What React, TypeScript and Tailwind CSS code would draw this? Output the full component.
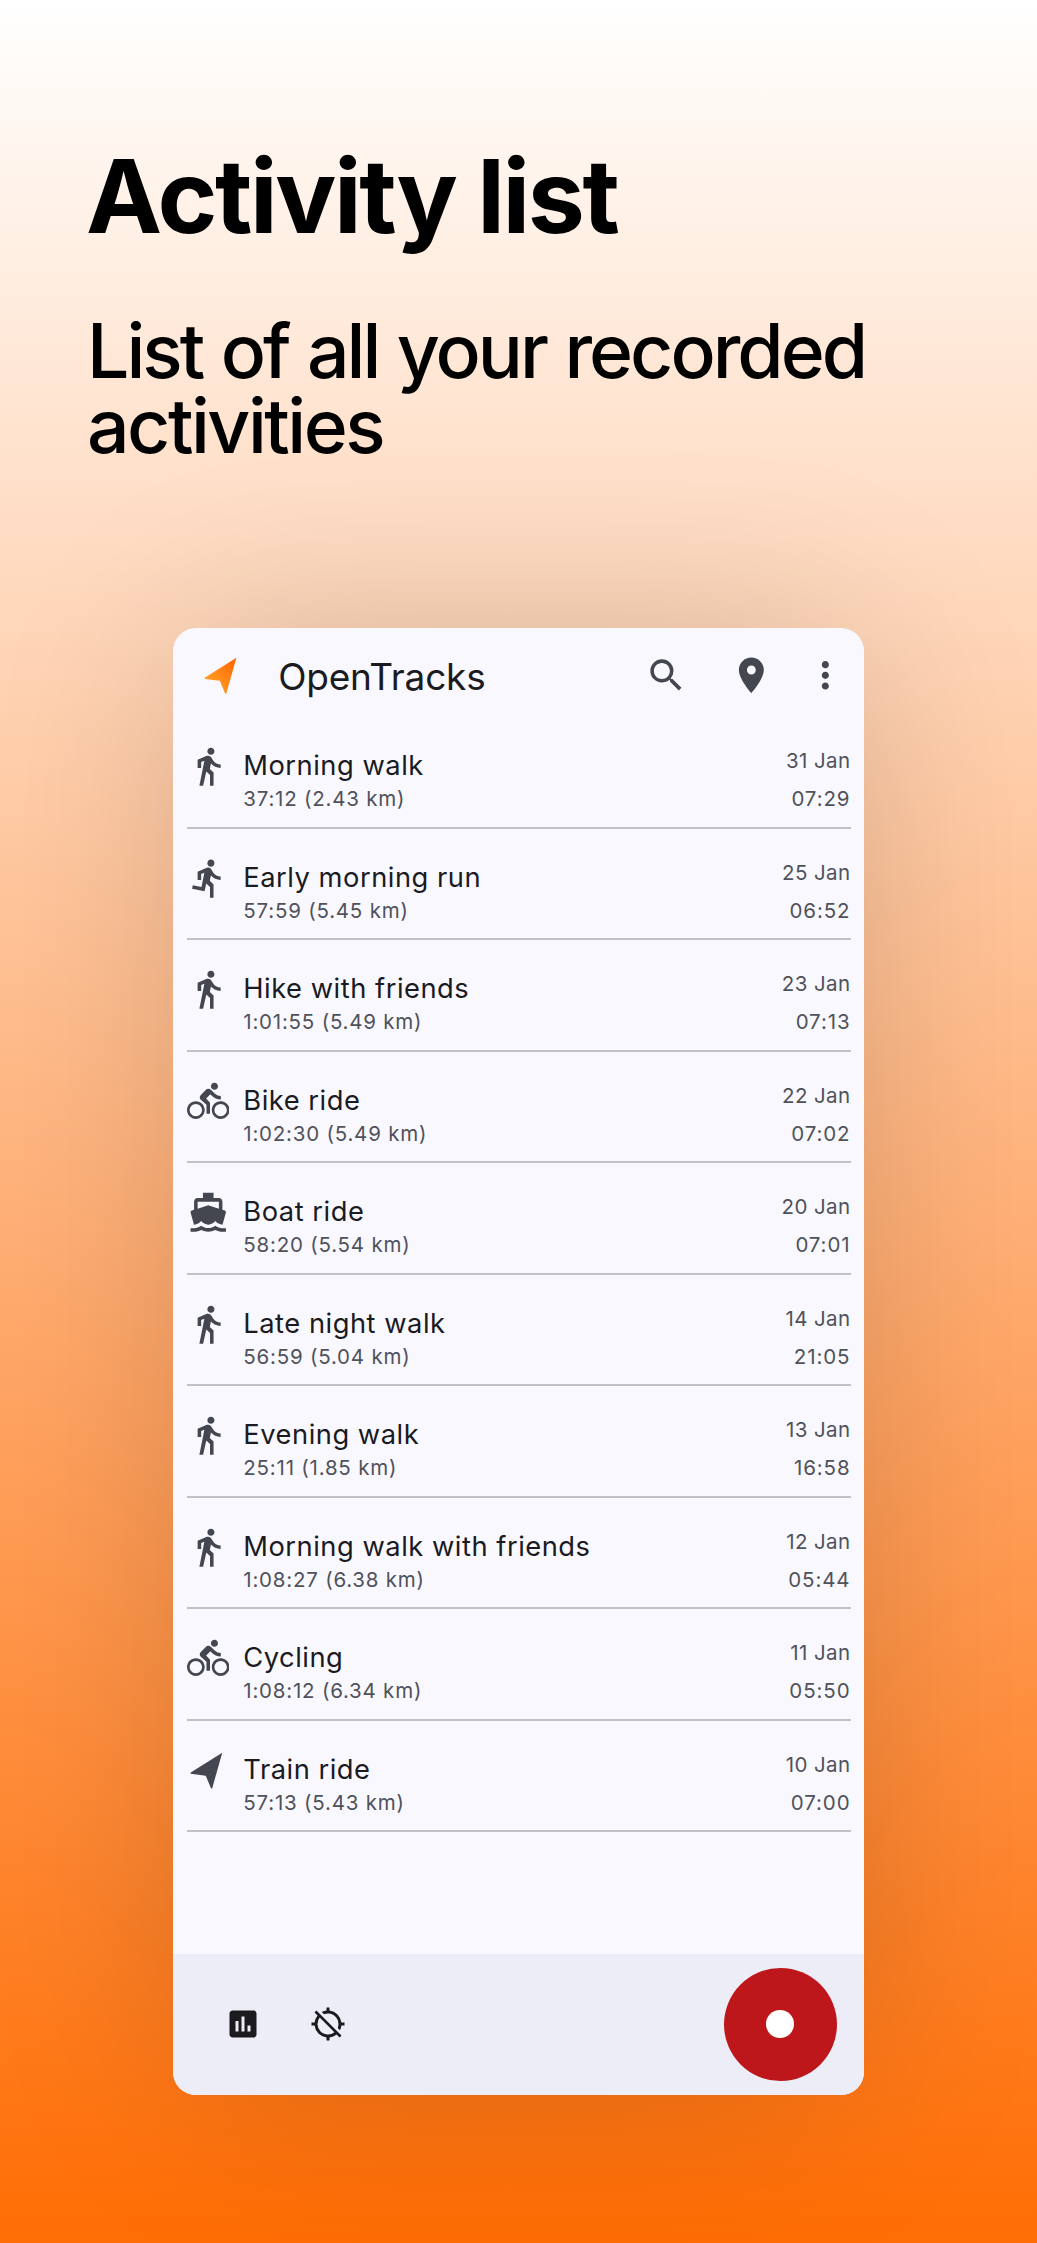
import type { ComponentType } from "react";
import {
  MdAssessment,
  MdDirectionsBike,
  MdDirectionsBoat,
  MdDirectionsRun,
  MdDirectionsWalk,
  MdLocationDisabled,
  MdMoreVert,
  MdPlace,
  MdSearch,
} from "react-icons/md";

type IconProps = { className?: string };

function ArrowIcon({ className, gradient }: IconProps & { gradient?: boolean }) {
  return (
    <svg viewBox="0 0 24 24" className={className} aria-hidden="true">
      <defs>
        <linearGradient id="arrow" x1="0" y1="1" x2="1" y2="0">
          <stop offset="0" stopColor="#ffa726" />
          <stop offset="0.35" stopColor="#ff931f" />
          <stop offset="1" stopColor="#ff6200" />
        </linearGradient>
      </defs>
      <path
        fill={gradient ? "url(#arrow)" : "currentColor"}
        d="M19.9 2.1 2.1 13.3v.7l8.5 1.1 3 7.2h.6z"
      />
    </svg>
  );
}

type Activity = {
  icon: ComponentType<IconProps>;
  name: string;
  detail: string;
  date: string;
  time: string;
};

const activities: Activity[] = [
  { icon: MdDirectionsWalk, name: "Morning walk", detail: "37:12 (2.43 km)", date: "31 Jan", time: "07:29" },
  { icon: MdDirectionsRun, name: "Early morning run", detail: "57:59 (5.45 km)", date: "25 Jan", time: "06:52" },
  { icon: MdDirectionsWalk, name: "Hike with friends", detail: "1:01:55 (5.49 km)", date: "23 Jan", time: "07:13" },
  { icon: MdDirectionsBike, name: "Bike ride", detail: "1:02:30 (5.49 km)", date: "22 Jan", time: "07:02" },
  { icon: MdDirectionsBoat, name: "Boat ride", detail: "58:20 (5.54 km)", date: "20 Jan", time: "07:01" },
  { icon: MdDirectionsWalk, name: "Late night walk", detail: "56:59 (5.04 km)", date: "14 Jan", time: "21:05" },
  { icon: MdDirectionsWalk, name: "Evening walk", detail: "25:11 (1.85 km)", date: "13 Jan", time: "16:58" },
  { icon: MdDirectionsWalk, name: "Morning walk with friends", detail: "1:08:27 (6.38 km)", date: "12 Jan", time: "05:44" },
  { icon: MdDirectionsBike, name: "Cycling", detail: "1:08:12 (6.34 km)", date: "11 Jan", time: "05:50" },
  { icon: ArrowIcon, name: "Train ride", detail: "57:13 (5.43 km)", date: "10 Jan", time: "07:00" },
];

function ActivityRow({ icon: Icon, name, detail, date, time }: Activity) {
  return (
    <li className="flex h-[111.5px] border-b-2 border-[#c1c1c6] pt-[28px]">
      <Icon className="size-[42.5px] shrink-0 text-[#44474f]" />
      <div className="ml-[14.3px] flex-1 whitespace-nowrap">
        <div className="mt-[3px] text-[27.3px] leading-[36px] tracking-[0.52px] text-[#1b1b1f]">{name}</div>
        <div className="mt-[1px] text-[20.5px] leading-[28px] tracking-[0.78px] text-[#50525a]">{detail}</div>
      </div>
      <div className="text-right text-[20.5px] leading-[28px] text-[#50525a]">
        <div className="mt-[2px] tracking-[0.4px]">{date}</div>
        <div className="mt-[10px] tracking-[0.9px]">{time}</div>
      </div>
    </li>
  );
}

export default function App() {
  return (
    <main className="flex h-[2243px] w-[1037px] flex-col overflow-hidden bg-linear-to-b/srgb from-white to-[#ff6d04] font-['Inter',sans-serif]">
      <div className="h-[628px] shrink-0 px-[87px] pt-[134px]">
        <h1 className="-ml-px text-[102px] leading-[124px] font-bold tracking-[-2.4px] text-black">Activity list</h1>
        <p className="mt-[55px] text-[75px] leading-[75px] font-[470] text-black">
          <span className="tracking-[-3px] [word-spacing:1.5px]">List of all your recorded</span>
          <br />
          <span className="tracking-[-2.5px]">activities</span>
        </p>
      </div>

      <section className="ml-[173px] flex h-[1467px] w-[691px] shrink-0 flex-col overflow-hidden rounded-[23px] bg-[#f9f8ff] shadow-[0_0_200px_-16px_rgba(0,0,0,0.18)]">
        <header className="flex h-[89px] shrink-0 items-start pt-[25.5px] pl-[27.5px] text-[#44474f]">
          <ArrowIcon gradient className="size-[42.7px]" />
          <div className="ml-[35px] h-[46px] w-[367px] text-[37px] leading-[46px] tracking-[-0.2px] text-[#1b1b1f]">
            OpenTracks
          </div>
          <MdSearch className="size-[42.7px]" />
          <MdPlace className="ml-[42px] size-[42.7px]" />
          <MdMoreVert className="ml-[31.5px] size-[42.7px]" />
        </header>

        <ul className="mx-[13.5px]">
          {activities.map((activity) => (
            <ActivityRow key={activity.date} {...activity} />
          ))}
        </ul>

        <footer className="mt-auto flex h-[141.3px] items-center bg-[#ecedf6] pl-[52.3px] text-[#1b1b1f]">
          <MdAssessment className="size-[36px]" />
          <MdLocationDisabled className="ml-[49px] size-[36px]" />
          <div className="mr-[27.5px] ml-auto flex size-[113px] items-center justify-center rounded-full bg-[#be171b]">
            <div className="size-[28px] rounded-full bg-white" />
          </div>
        </footer>
      </section>
    </main>
  );
}
